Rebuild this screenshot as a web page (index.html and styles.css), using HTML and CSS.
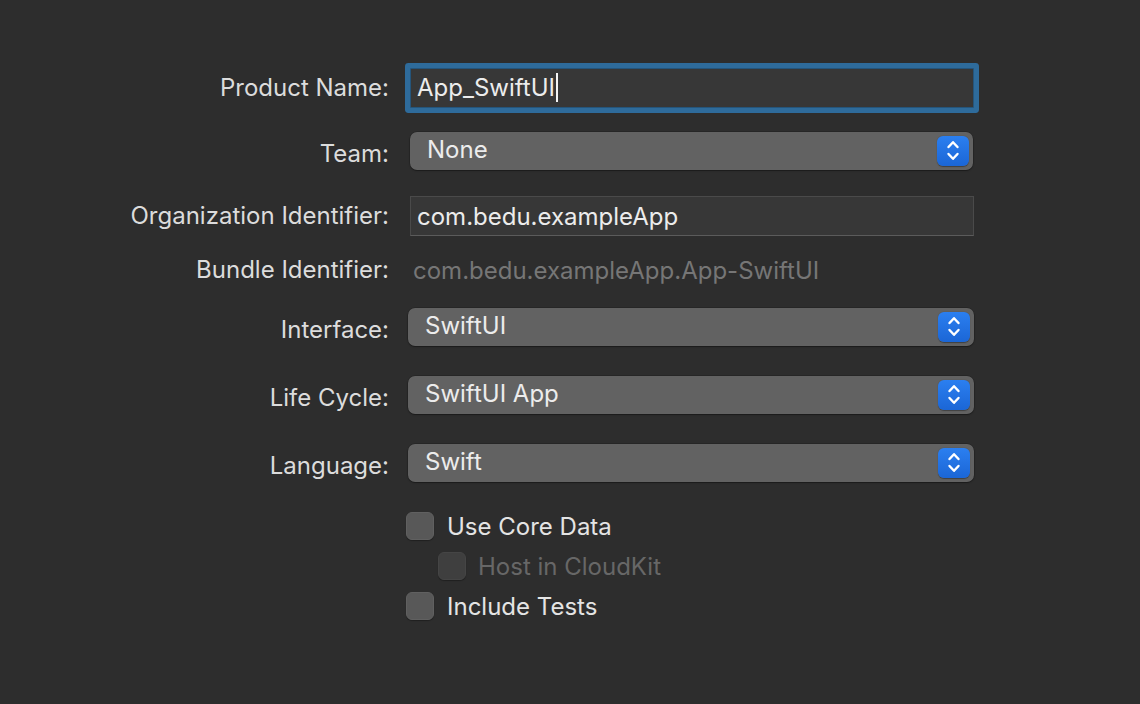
FILE: index.html
```html
<!DOCTYPE html>
<html lang="en">
<head>
<meta charset="utf-8">
<title>New Project Options</title>
<link rel="stylesheet" href="styles.css">
</head>
<body>
<div class="form">
  <div class="row row-name">
    <div class="label">Product Name:</div>
    <div class="field focused"><span class="value">App_SwiftUI</span><span class="caret"></span></div>
  </div>
  <div class="row row-team">
    <div class="label">Team:</div>
    <div class="popup popup-inset"><span class="value">None</span><span class="stepper"><svg viewBox="0 0 32 30" width="32" height="30"><path d="M11.5 11 L16 6.2 L20.5 11 M11.5 18 L16 22.8 L20.5 18" fill="none" stroke="#fff" stroke-width="2.4" stroke-linecap="round" stroke-linejoin="round"/></svg></span></div>
  </div>
  <div class="row row-org">
    <div class="label">Organization Identifier:</div>
    <div class="field"><span class="value">com.bedu.exampleApp</span></div>
  </div>
  <div class="row row-bundle">
    <div class="label">Bundle Identifier:</div>
    <div class="static">com.bedu.exampleApp.App-SwiftUI</div>
  </div>
  <div class="row row-popup">
    <div class="label">Interface:</div>
    <div class="popup"><span class="value">SwiftUI</span><span class="stepper"><svg viewBox="0 0 32 30" width="32" height="30"><path d="M11.5 11 L16 6.2 L20.5 11 M11.5 18 L16 22.8 L20.5 18" fill="none" stroke="#fff" stroke-width="2.4" stroke-linecap="round" stroke-linejoin="round"/></svg></span></div>
  </div>
  <div class="row row-popup">
    <div class="label">Life Cycle:</div>
    <div class="popup"><span class="value">SwiftUI App</span><span class="stepper"><svg viewBox="0 0 32 30" width="32" height="30"><path d="M11.5 11 L16 6.2 L20.5 11 M11.5 18 L16 22.8 L20.5 18" fill="none" stroke="#fff" stroke-width="2.4" stroke-linecap="round" stroke-linejoin="round"/></svg></span></div>
  </div>
  <div class="row row-popup">
    <div class="label">Language:</div>
    <div class="popup"><span class="value">Swift</span><span class="stepper"><svg viewBox="0 0 32 30" width="32" height="30"><path d="M11.5 11 L16 6.2 L20.5 11 M11.5 18 L16 22.8 L20.5 18" fill="none" stroke="#fff" stroke-width="2.4" stroke-linecap="round" stroke-linejoin="round"/></svg></span></div>
  </div>
  <div class="checks">
    <div class="check"><span class="box"></span><span class="check-label">Use Core Data</span></div>
    <div class="check check-sub disabled"><span class="box"></span><span class="check-label">Host in CloudKit</span></div>
    <div class="check"><span class="box"></span><span class="check-label">Include Tests</span></div>
  </div>
</div>
</body>
</html>
```

FILE: styles.css
```css
html, body {
  margin: 0;
  padding: 0;
}

body {
  background: #2d2d2d;
  width: 1140px;
  height: 704px;
  overflow: hidden;
  font-family: Inter, "Noto Sans", "Liberation Sans", sans-serif;
  font-size: 24px;
  color: #dedede;
}

.form {
  width: 974px;
  padding-top: 62px;
  display: flex;
  flex-direction: column;
}

.row {
  display: grid;
  grid-template-columns: 389px 566px;
  column-gap: 19px;
  align-items: center;
}

.label {
  text-align: right;
  color: #dcdcdc;
  line-height: 28px;
}

.row-team .label,
.row-popup .label {
  margin-top: 6px;
}

.row-name { height: 51px; }
.row-team { height: 38px; margin-top: 19px; }
.row-org { height: 40px; margin-top: 26px; }
.row-bundle { height: 32px; margin-top: 18px; }
.row-popup { height: 38px; margin-top: 30px; }
.row-bundle + .row-popup { margin-top: 22px; }

.field {
  margin-left: 2px;
  height: 40px;
  box-sizing: border-box;
  background: #373737;
  border: 1px solid #4a4a4a;
  border-bottom-color: #5b5b5b;
  display: flex;
  align-items: center;
  padding-left: 6px;
  color: #ececec;
}

.field.focused {
  border-color: #25557b;
  border-radius: 1px;
  box-shadow: 0 0 0 5px #2e6b9b;
}

.caret {
  width: 2px;
  height: 29px;
  background: #f4f4f4;
  margin-left: 1px;
}

.static {
  margin-left: 5px;
  color: #767676;
}

.popup {
  height: 38px;
  box-sizing: border-box;
  border-radius: 7px;
  background: #626262;
  box-shadow: 0 0 0 0.5px rgba(0, 0, 0, 0.25), 0 1px 1.5px rgba(0, 0, 0, 0.35);
  display: flex;
  align-items: center;
  justify-content: space-between;
  padding-left: 17px;
  padding-right: 4px;
  color: #ececec;
}

.popup-inset {
  margin-left: 2px;
  margin-right: 1px;
}

.popup .value {
  margin-top: -3px;
}

.stepper {
  width: 32px;
  height: 30px;
  border-radius: 6px;
  background: linear-gradient(#2b7ff0, #1b66d6);
  box-shadow: 0 0.5px 1px rgba(0, 0, 0, 0.35);
  display: flex;
}

.checks {
  margin-top: 30px;
  padding-left: 406px;
  display: flex;
  flex-direction: column;
  gap: 12px;
}

.check {
  display: flex;
  align-items: center;
  height: 28px;
  gap: 13px;
  color: #e4e4e4;
}

.box {
  width: 28px;
  height: 28px;
  box-sizing: border-box;
  border-radius: 6px;
  background: #585858;
  border: 1px solid #606060;
  box-shadow: 0 1px 1px rgba(0, 0, 0, 0.3);
  flex: none;
}

.check-sub {
  padding-left: 32px;
  gap: 12px;
}

.check.disabled {
  color: #676767;
}

.check.disabled .box {
  background: #3f3f3f;
  border-color: #454545;
}
```
